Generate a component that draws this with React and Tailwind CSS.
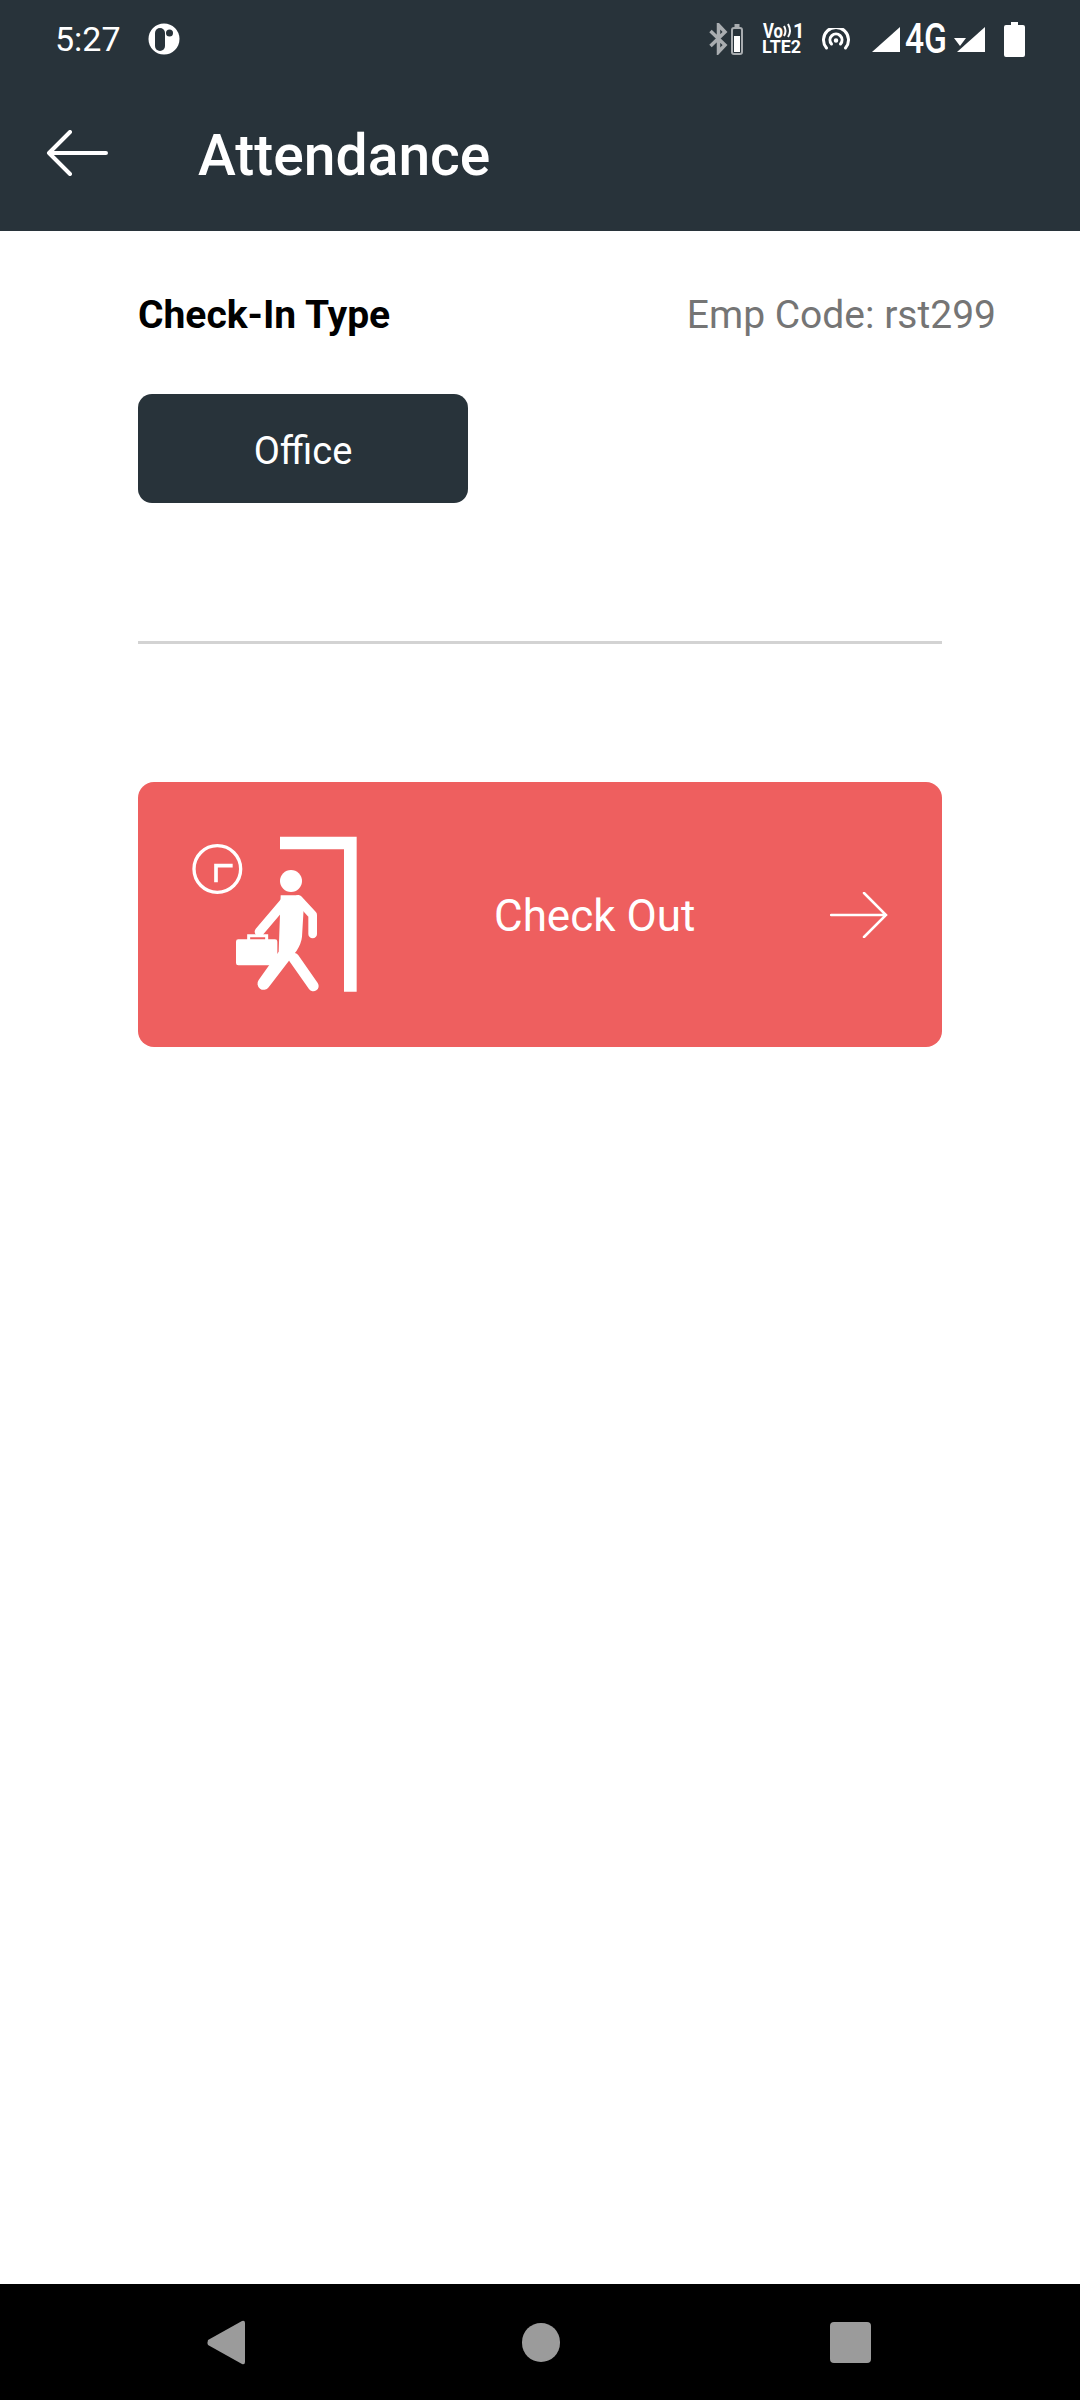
const StatusLogo = () => (
  <svg width="32" height="32" viewBox="0 0 32 32" className="ml-[27px]">
    <circle cx="16" cy="16" r="15.5" fill="#fff" />
    <rect x="7" y="5" width="10" height="23" rx="5" fill="#28333a" />
    <circle cx="21.500" cy="10" r="3.500" fill="#28333a" />
  </svg>
)

const BluetoothBattery = () => (
  <svg width="34" height="32" viewBox="0 0 34 32" fill="none">
    <path d="M1.500 8 L16 22 L9.500 29 L9.500 2 L16 9 L1.500 23" stroke="#a9adb0" strokeWidth="3.500" />
    <rect x="23" y="5" width="10" height="26" rx="2" stroke="#a9adb0" strokeWidth="2" />
    <rect x="25.500" y="1" width="5" height="4" fill="#a9adb0" />
    <rect x="25" y="13" width="6" height="16" fill="#fff" />
  </svg>
)

// taller than it looks so the text boxes stay inside the svg
const Volte = () => (
  <svg width="46" height="48" viewBox="-2 -8 46 48" className="ml-[17px] -mr-[2px] -my-[8px]" fill="#fff">
    <text x="1" y="15" fontFamily="Roboto, sans-serif" fontWeight="700" fontSize="20" textLength="20" lengthAdjust="spacingAndGlyphs">Vo</text>
    <path d="M22 13 Q25 8 22 3 M26 14 Q30 8 26 1" stroke="#fff" strokeWidth="2" fill="none" />
    <text x="31" y="15" fontFamily="Roboto, sans-serif" fontWeight="700" fontSize="20">1</text>
    <text x="0" y="30" fontFamily="Roboto, sans-serif" fontWeight="700" fontSize="19" textLength="39" lengthAdjust="spacingAndGlyphs">LTE2</text>
  </svg>
)

const Hotspot = () => (
  <svg width="28" height="22" viewBox="0 0 28 22" className="ml-[18px]" fill="none" stroke="#fff" strokeWidth="3" strokeLinecap="round">
    <path d="M4.500 20 A12.500 12.500 0 1 1 23.500 20" />
    <path d="M9.500 16 A6 6 0 1 1 18.500 16" />
    <circle cx="14" cy="12.500" r="1.500" fill="#fff" strokeWidth="1.500" />
  </svg>
)

const Signal = ({ className }) => (
  <svg width="28" height="25" viewBox="0 0 28 25" className={className} fill="#fff">
    <path d="M0 25 L28 0 L28 25 Z" />
  </svg>
)

const BackArrow = () => (
  <svg width="62" height="46" viewBox="0 0 62 46" className="ml-[46px] mb-[5px]" fill="none" stroke="#fff" strokeWidth="4" strokeLinecap="round" strokeLinejoin="round">
    <path d="M60 23 L3 23 M24 2 L3 23 L24 44" />
  </svg>
)

const CheckOutFigure = () => (
  <svg width="170" height="265" viewBox="210 36 510 795" className="ml-[52px] shrink-0" fill="#fff">
    <circle cx="292" cy="297" r="70" fill="none" stroke="#fff" strokeWidth="10" />
    <path d="M338 287 L288 287 L288 337" fill="none" stroke="#fff" strokeWidth="11" />
    <path d="M480 200 L710 200 L710 665 L672 665 L672 238 L480 238 Z" />
    <circle cx="513" cy="333" r="33" />
    <path d="M482 376 L532 376 Q548 380 552 398 L546 500 Q544 520 530 542 L446 652 A18 18 0 0 1 416 630 L476 545 Z" />
    <path d="M535 388 L578 435 L578 492" fill="none" stroke="#fff" strokeWidth="26" strokeLinecap="round" strokeLinejoin="round" />
    <path d="M492 398 L418 485" fill="none" stroke="#fff" strokeWidth="28" strokeLinecap="round" />
    <path d="M522 565 L580 648" fill="none" stroke="#fff" strokeWidth="32" strokeLinecap="round" />
    <rect x="348" y="508" width="124" height="78" rx="7" />
    <path d="M386 510 L386 497 L440 497 L440 510" fill="none" stroke="#fff" strokeWidth="9" />
  </svg>
)

const NavBar = () => (
  <div className="h-[116px] bg-black flex items-center shrink-0">
    <svg width="38" height="45" viewBox="0 0 38 45" className="ml-[207px]" fill="#9b9b9b">
      <path d="M35 1 Q38 0 38 3 L38 42 Q38 45 35 44 L1 25 Q0 22.500 1 20 Z" />
    </svg>
    <div className="ml-[277px] w-[38px] h-[39px] rounded-full bg-[#9b9b9b]"></div>
    <div className="ml-[270px] w-[41px] h-[41px] rounded-[4px] bg-[#9b9b9b]"></div>
  </div>
)

export default function App() {
  return (
    <div className="w-[1080px] h-[2400px] flex flex-col bg-white font-['Roboto',sans-serif]">
      <header className="bg-[#28333a] h-[231px] shrink-0 text-white">
        <div className="h-[78px] flex items-center pl-[55px]">
          <span className="text-[34px] leading-none">5:27</span>
          <StatusLogo />
          <div className="ml-auto mr-[55px] flex items-center">
            <BluetoothBattery />
            <Volte />
            <Hotspot />
            <Signal className="ml-[22px]" />
            <span className="ml-[5px] w-[39px] text-[42px] leading-none font-medium scale-x-[0.8] origin-left">4G</span>
            <svg width="12" height="8" viewBox="0 0 12 8" className="ml-[10px] mt-[6px]" fill="#fff">
              <path d="M0 0 L12 0 L6 8 Z" />
            </svg>
            <Signal className="-ml-[9px]" />
            <svg width="21" height="35" viewBox="0 0 21 35" className="ml-[19px]" fill="#fff">
              <path d="M7 0 L14 0 L14 3 L19 3 Q21 3 21 5 L21 33 Q21 35 19 35 L2 35 Q0 35 0 33 L0 5 Q0 3 2 3 L7 3 Z" />
            </svg>
          </div>
        </div>
        <div className="h-[153px] flex items-center pt-[2px]">
          <BackArrow />
          <h1 className="ml-[91px] -translate-x-[1px] text-[57px] leading-none font-medium">Attendance</h1>
        </div>
      </header>

      <main className="flex-1 pl-[138px] pr-[138px]">
        <div className="flex justify-between items-center mt-[62px] -mr-[54px]">
          <span className="text-[39px] leading-[45px] font-bold text-black">Check-In Type</span>
          <span className="text-[39px] leading-[45px] text-[#757575]">Emp Code: rst299</span>
        </div>

        <button className="mt-[56px] w-[330px] h-[109px] bg-[#28333a] rounded-[14px] pt-[6px] text-white text-[38px] block">Office</button>

        <div className="mt-[138px] h-[3px] bg-[#d3d3d3]"></div>

        <button className="mt-[138px] w-full h-[265px] bg-[#ee5f5f] rounded-[16px] text-white flex items-center">
          <CheckOutFigure />
          <span className="ml-[134px] pt-[2px] text-[44px] leading-none">Check Out</span>
          <svg width="58" height="46" viewBox="0 0 58 46" className="ml-auto mr-[54px]" fill="none" stroke="#fff" strokeWidth="2.500" strokeLinecap="round">
            <path d="M1 23 L56 23 M34 1 L56 23 L34 45" />
          </svg>
        </button>
      </main>

      <NavBar />
    </div>
  )
}
